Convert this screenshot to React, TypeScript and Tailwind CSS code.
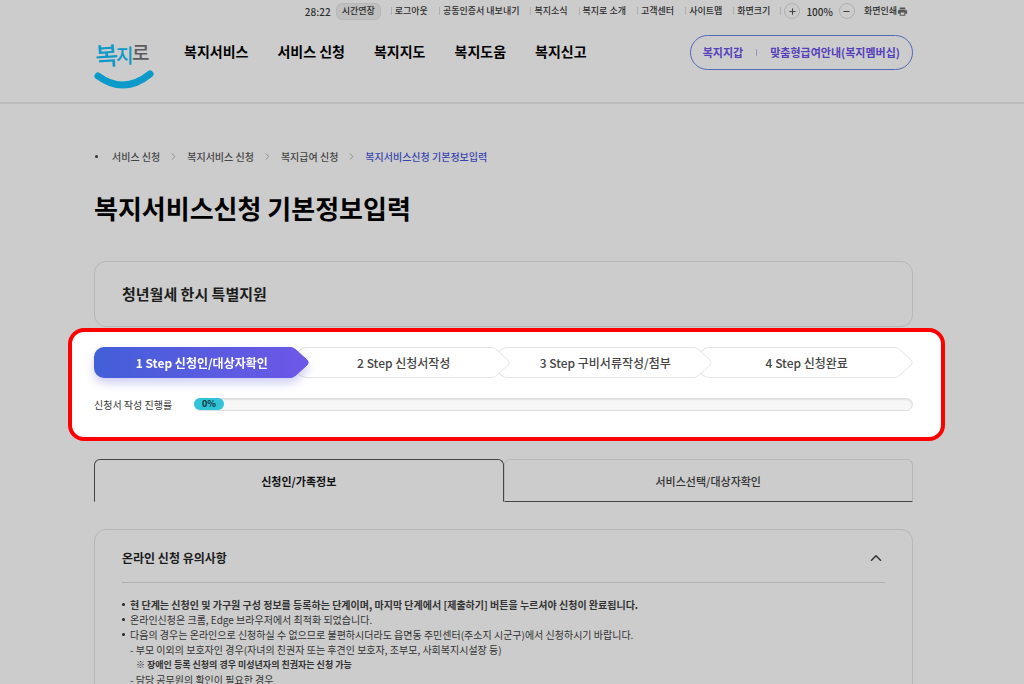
import { useState } from "react";
import { ChevronRight, ChevronUp, Minus, Plus } from "lucide-react";
import { MdPrint } from "react-icons/md";

const utilityLinks = ["로그아웃", "공동인증서 내보내기", "복지소식", "복지로 소개", "고객센터", "사이트맵"];

const mainMenu = ["복지서비스", "서비스 신청", "복지지도", "복지도움", "복지신고"];

const breadcrumbs = ["서비스 신청", "복지서비스 신청", "복지급여 신청"];

// earlier steps sit on top of the next one
const steps = [
  { label: "1 Step 신청인/대상자확인", layer: "z-40" },
  { label: "2 Step 신청서작성", layer: "z-30 -ml-[13px]" },
  { label: "3 Step 구비서류작성/첨부", layer: "z-20 -ml-[13px]" },
  { label: "4 Step 신청완료", layer: "z-10 -ml-[13px]" },
];

const tabs = ["신청인/가족정보", "서비스선택/대상자확인"];

const Logo = () => (
  <svg width="60" height="56" viewBox="0 0 60 56" className="overflow-visible" role="img" aria-label="복지로">
    <g fontFamily="'Noto Sans CJK KR', sans-serif" fontWeight="500">
      <text x="1" y="31" fontSize="25" fill="#0b9ac9" transform="rotate(-4 12 20)">
        복
      </text>
      <text x="22" y="29" fontSize="19" fill="#0b9ac9">
        지
      </text>
      <text x="38" y="26" fontSize="19" fill="#5c5c60">
        로
      </text>
    </g>
    <path d="M4 42 Q30 61 56 40" fill="none" stroke="#0b9ac9" strokeWidth="7" strokeLinecap="round" />
  </svg>
);

const UtilityBar = () => (
  <div className="flex h-[22px] items-center justify-end pr-[5px] text-[9px] font-medium text-[#2c2c2c]">
    <span className="mr-[5px] text-[10px]">28:22</span>
    <button className="mr-[10px] h-[17px] rounded-md border border-[#b8b8b8] bg-[#bfbfbf] px-[5px]">시간연장</button>
    <ul className="flex items-center gap-[11px]">
      {utilityLinks.map(link => (
        <li key={link} className="flex items-center gap-[3px]">
          <span className="h-2 w-px bg-[#b0b0b0]" />
          <a href="#">{link}</a>
        </li>
      ))}
      <li className="flex items-center gap-[3px]">
        <span className="h-2 w-px bg-[#b0b0b0]" />
        <span>화면크기</span>
      </li>
    </ul>
    <span className="mr-[3px] ml-[10px] h-2 w-px bg-[#b0b0b0]" />
    <button
      aria-label="확대"
      className="flex h-4 w-4 items-center justify-center rounded-full border border-[#b0b0b0] text-[#444]"
    >
      <Plus size={9} strokeWidth={3} />
    </button>
    <span className="mx-[6px] text-[10px]">100%</span>
    <button
      aria-label="축소"
      className="flex h-4 w-4 items-center justify-center rounded-full border border-[#b0b0b0] text-[#444]"
    >
      <Minus size={9} strokeWidth={3} />
    </button>
    <button className="ml-[9px] flex items-center">
      화면인쇄
      <MdPrint size={11} className="text-[#555]" />
    </button>
  </div>
);

const Header = () => (
  <header className="h-[104px] border-b-2 border-[#bdbdbd] pr-[17px]">
    <div className="mx-auto max-w-[819px]">
      <UtilityBar />
      <div className="flex items-start pt-3">
        <a href="#" className="mr-[30px]">
          <Logo />
        </a>
        <nav className="flex h-[34px] items-center gap-[29px] text-sm font-bold text-black">
          {mainMenu.map(menu => (
            <a key={menu} href="#">
              {menu}
            </a>
          ))}
        </nav>
        <div className="mt-px ml-auto flex h-[35px] items-center gap-[13px] rounded-[18px] border border-[#5469b8] px-3 text-[11px] font-bold text-[#5540bb]">
          <a href="#">복지지갑</a>
          <span className="h-[7px] w-px bg-[#9a94bb]" />
          <a href="#">맞춤형급여안내(복지멤버십)</a>
        </div>
      </div>
    </div>
  </header>
);

const Breadcrumb = () => (
  <nav aria-label="현재 위치" className="flex h-4 items-center text-[10px] font-medium text-[#444]">
    <span className="mr-[14px] ml-px h-[3px] w-[3px] rounded-full bg-[#333]" />
    {breadcrumbs.map(crumb => (
      <span key={crumb} className="flex items-center">
        <a href="#">{crumb}</a>
        <ChevronRight size={11} strokeWidth={2} className="mx-2 text-[#888]" />
      </span>
    ))}
    <span aria-current="page" className="text-[#3844ad]">
      복지서비스신청 기본정보입력
    </span>
  </nav>
);

const Steps = ({ current }: { current: number }) => (
  <ol className="flex">
    {steps.map(({ label, layer }, index) => {
      const active = index === current;
      return (
        <li
          key={label}
          aria-current={active ? "step" : undefined}
          className={`flex h-[31px] flex-1 text-xs ${layer} ${active ? "font-bold text-white drop-shadow-[0_5px_5px_rgba(90,90,220,0.3)]" : "font-medium text-[#444]"}`}
        >
          <span
            className={`flex flex-1 items-center justify-center rounded-l-[10px] pl-[19px] whitespace-nowrap ${active ? "bg-linear-to-r from-[#425fd8] to-[#6858e6]" : "border-y border-l border-[#e4e4e4] bg-white"}`}
          >
            {label}
          </span>
          <svg width="19" height="31" viewBox="0 0 19 31" className="-ml-px shrink-0" aria-hidden="true">
            <path
              d="M0 0.5 C3 0.5 4 1.5 6 3 L17 13 Q19.5 15.5 17 18 L6 28 C4 29.5 3 30.5 0 30.5"
              fill={active ? "#6c58e8" : "#fff"}
              stroke={active ? "#6c58e8" : "#e4e4e4"}
            />
          </svg>
        </li>
      );
    })}
  </ol>
);

const ProgressBar = ({ value }: { value: number }) => (
  <div className="flex items-center text-[10px] text-[#333]">
    <span id="progress-label" className="w-[100px]">
      신청서 작성 진행률
    </span>
    <div
      role="progressbar"
      aria-labelledby="progress-label"
      aria-valuenow={value}
      className="h-[13px] flex-1 rounded-full border border-[#dedede] bg-[#f7f7f7] shadow-[inset_0_1px_2px_rgba(0,0,0,0.1)]"
    >
      <div
        className="-mt-px -ml-px flex h-3 min-w-[30px] items-center justify-center rounded-full bg-[#2fc4d8] text-[9px] font-bold text-[#12303a]"
        style={{ width: `${value}%` }}
      >
        {value}%
      </div>
    </div>
  </div>
);

const Notice = () => {
  const [open, setOpen] = useState(true);

  return (
    <section className="mt-[27px] rounded-xl border border-[#b7b7b7] px-[27px] pb-10">
      <h3 className="border-b border-[#b0b0b0]">
        <button
          onClick={() => setOpen(!open)}
          aria-expanded={open}
          className="flex h-[52px] w-full items-center justify-between pt-1 text-xs font-bold text-[#1c1c1c]"
        >
          온라인 신청 유의사항
          <ChevronUp size={18} strokeWidth={2} className="text-[#333]" />
        </button>
      </h3>
      {open && (
        <ul className="list-none pt-[14px] text-[10px] leading-[15px] text-[#333] *:relative *:pl-2 *:before:absolute *:before:top-[6px] *:before:left-0 *:before:h-[3px] *:before:w-[3px] *:before:rounded-full *:before:bg-[#222]">
          <li className="font-bold">
            현 단계는 신청인 및 가구원 구성 정보를 등록하는 단계이며, 마지막 단계에서 [제출하기] 버튼을 누르셔야
            신청이 완료됩니다.
          </li>
          <li>온라인신청은 크롬, Edge 브라우저에서 최적화 되었습니다.</li>
          <li>
            다음의 경우는 온라인으로 신청하실 수 없으므로 불편하시더라도 읍면동 주민센터(주소지 시군구)에서
            신청하시기 바랍니다.
            <p>- 부모 이외의 보호자인 경우(자녀의 친권자 또는 후견인 보호자, 조부모, 사회복지시설장 등)</p>
            <p className="pl-[6px] text-[9px] font-bold">※ 장애인 등록 신청의 경우 미성년자의 친권자는 신청 가능</p>
            <p>- 담당 공무원의 확인이 필요한 경우</p>
          </li>
        </ul>
      )}
    </section>
  );
};

export default function App() {
  const [activeTab, setActiveTab] = useState(0);

  return (
    <div className="min-h-screen bg-[#ccc] font-['Noto_Sans_CJK_KR',sans-serif]">
      <Header />
      <div className="pr-[17px]">
        <main className="mx-auto max-w-[819px] pt-11">
          <Breadcrumb />
          <h1 className="mt-[26px] text-[26px] leading-9 font-bold text-black">복지서비스신청 기본정보입력</h1>

          <div className="mt-[35px] flex h-[66px] items-center rounded-xl border border-[#b7b7b7] px-[27px]">
            <h2 className="text-[15px] font-bold text-[#1c1c1c]">청년월세 한시 특별지원</h2>
          </div>

          <section className="-mr-8 -ml-[26px] mt-px flex h-[113px] flex-col gap-[19px] rounded-2xl border-4 border-[#f00] bg-white pt-[15px] pr-7 pl-[22px]">
            <Steps current={0} />
            <ProgressBar value={0} />
          </section>

          <div role="tablist" className="mt-[18px] flex h-[43px] text-[11px]">
            {tabs.map((tab, index) => (
              <button
                key={tab}
                role="tab"
                aria-selected={index === activeTab}
                onClick={() => setActiveTab(index)}
                className={`flex-1 rounded-t-md border pt-px ${
                  index === activeTab
                    ? "border-[#444] border-b-transparent font-bold text-[#111]"
                    : "border-[#b7b7b7] border-b-[#444] font-medium text-[#333]"
                }`}
              >
                {tab}
              </button>
            ))}
          </div>

          <Notice />
        </main>
      </div>
    </div>
  );
}
